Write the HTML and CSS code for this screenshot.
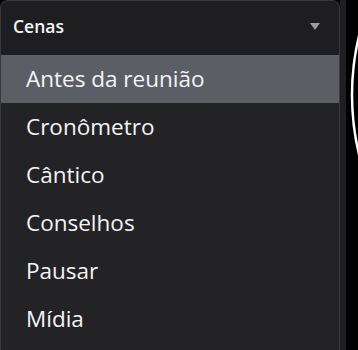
FILE: index.html
```html
<!DOCTYPE html>
<html lang="pt">

<head>
    <meta charset="UTF-8">
    <title>Cenas</title>
    <link rel="stylesheet" href="styles.css">
</head>

<body>
    <div class="screen">
        <section class="panel">
            <header class="panel-head">
                <span class="panel-title">Cenas</span>
                <span class="caret"></span>
            </header>
            <ul class="scene-list">
                <li class="scene ativo">Antes da reunião</li>
                <li class="scene">Cronômetro</li>
                <li class="scene">Cântico</li>
                <li class="scene">Conselhos</li>
                <li class="scene">Pausar</li>
                <li class="scene">Mídia</li>
            </ul>
        </section>
        <div class="gutter"></div>
        <div class="preview">
            <svg class="ring" width="600" height="600" viewBox="0 0 600 600">
                <circle cx="300" cy="300" r="254" fill="none" stroke="#ffffff" stroke-width="2.5"/>
            </svg>
        </div>
    </div>
</body>

</html>
```

FILE: styles.css
```css
body {
    background-color: #000;
    margin: 0;
    font-family: "Open Sans", "Noto Sans", sans-serif;
    color: #f4f4f6;
}

.screen {
    display: flex;
    height: 350px;
    overflow: hidden;
}

.panel {
    width: 338px;
    border: 1px solid #39393c;
    border-bottom: none;
    border-radius: 8px 8px 0 0;
    background-color: #232326;
    overflow: hidden;
}

.panel-head {
    height: 54px;
    display: flex;
    align-items: center;
    justify-content: space-between;
    padding: 0 19px 0 12px;
    background-color: #1e1e20;
}

.panel-title {
    font-size: 17.5px;
    font-weight: 600;
    margin-top: -4px;
}

.caret {
    width: 0;
    height: 0;
    border-left: 5px solid transparent;
    border-right: 5px solid transparent;
    border-top: 7px solid #9c9ca0;
    margin-top: -4px;
}

.scene-list {
    list-style: none;
    margin: 0;
    padding: 0;
}

.scene {
    height: 48px;
    line-height: 48px;
    padding-left: 25px;
    font-size: 22.5px;
}

.scene.ativo {
    background-color: #5c5e66;
}

.gutter {
    width: 6px;
    background-color: #1f1f21;
}

.preview {
    flex: 1;
    position: relative;
}

.ring {
    position: absolute;
    left: -40px;
    top: -205px;
}
```
